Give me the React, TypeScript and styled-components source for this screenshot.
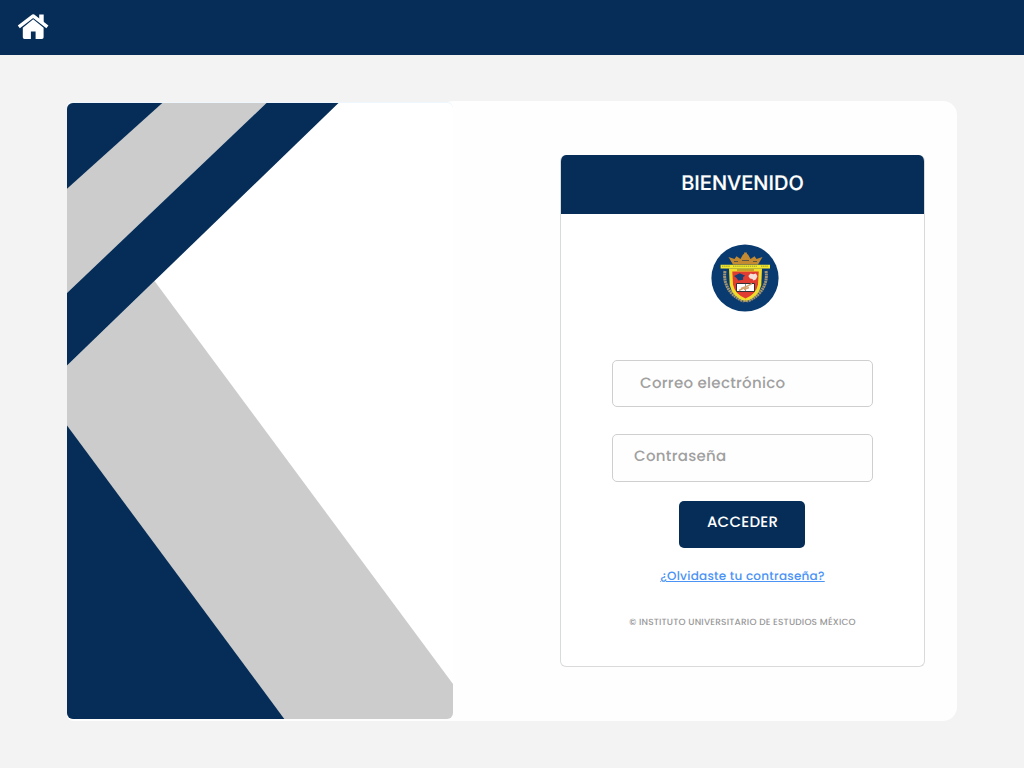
import React from 'react';
import styled, { createGlobalStyle } from 'styled-components';

const navy = '#052d57';

const GlobalStyle = createGlobalStyle`
  *, *::before, *::after { box-sizing: border-box; }
  body { margin: 0; background: #f3f3f3; font-family: Poppins, Inter, sans-serif; text-rendering: geometricPrecision; }
  input, button { text-rendering: inherit; }
`;

const Page = styled.div`
  display: flex;
  flex-direction: column;
  height: 768px;
`;

const TopBar = styled.header`
  display: flex;
  height: 55px;
  padding: 13px 17px;
  background: ${navy};
`;

const HomeLink = styled.a`
  display: block;
  width: 32px;
  height: 28px;
`;

const Panel = styled.main`
  display: flex;
  justify-content: space-between;
  width: 890px;
  height: 620px;
  margin: 46px auto 0;
  padding: 2px 32px 2px 0;
  background: linear-gradient(to right, #f3f3f3 0, #f3f3f3 380px, #fefefe 386px) top / 100% 1px no-repeat, #fefefe;
  border-radius: 6px 14px 14px 6px;
`;

const Artwork = styled.div`
  width: 386px;
  height: 616px;
  border-radius: 6px;
  overflow: hidden;
  background: #fff;
  box-shadow: 0 -1px 0 #eef7fd;
  svg { display: block; }
`;

const LoginCard = styled.form`
  display: flex;
  flex-direction: column;
  align-items: center;
  width: 365px;
  height: 512px;
  margin-top: 52px;
  border: 1px solid #d9dadb;
  border-top: 0;
  border-radius: 6px;
  background: #fff;
  overflow: hidden;
`;

const CardTitle = styled.h1`
  width: 100%;
  height: 59px;
  margin: 0;
  background: ${navy};
  color: #fff;
  font: 500 20px/57px Inter, sans-serif;
  -webkit-text-stroke: 0.2px #fff;
  letter-spacing: 0.03px;
  text-align: center;
`;

const Crest = styled.div`
  width: 68px;
  height: 68px;
  margin: 30px 0 48px 5px;
  svg { display: block; }
`;

const Field = styled.input<{ $indent: number; $tall?: boolean }>`
  width: 261px;
  height: ${p => (p.$tall ? 48 : 47)}px;
  margin-bottom: ${p => (p.$tall ? 19 : 27)}px;
  padding: 0 16px ${p => (p.$tall ? 4 : 1)}px ${p => p.$indent}px;
  border: 1px solid #cfcfcf;
  border-radius: 5px;
  background: #fefefe;
  font: 500 15px Poppins, Inter, sans-serif;
  letter-spacing: 0.3px;
  outline: 0;
  &::placeholder { color: #a0a0a0; opacity: 1; }
`;

const SubmitButton = styled.button`
  width: 126px;
  height: 47px;
  margin-right: 1px;
  padding: 0 0 4px 1px;
  border: 0;
  border-radius: 5px;
  background: ${navy};
  color: #fff;
  font: 500 15px/25px Poppins, Inter, sans-serif;
  letter-spacing: 0.25px;
`;

const ForgotLink = styled.a`
  margin-top: 20px;
  color: #4b93f5;
  font-size: 12px;
  font-weight: 500;
  line-height: 18px;
  letter-spacing: 0.25px;
  text-decoration: underline;
  text-decoration-thickness: 1px;
  text-underline-offset: 1px;
`;

const Copyright = styled.p`
  margin: 30px 0 0;
  color: #999;
  font-size: 9px;
  font-weight: 500;
  line-height: 14px;
  letter-spacing: 0.18px;
  white-space: nowrap;
`;

const HomeIcon = () => (
  <svg width="32" height="28" viewBox="0 0 32 28" aria-label="Inicio">
    <path d="M1.8 13.8 16.2 2.9 30.4 13.8" fill="none" stroke="#fff" strokeWidth="3.4" strokeLinejoin="round" />
    <path d="M22.2 1.5h4.5v10l-4.5-3.8z" fill="#fff" />
    <path d="M5.8 14.8 16.2 6.3 26.6 14.8v9.4q0 1.7-1.7 1.7h-6.3v-7.4h-4.7v7.4H7.5Q5.8 25.9 5.8 24.2z" fill="#fff" />
  </svg>
);

const Stripes = () => (
  <svg width="386" height="616" viewBox="0 0 386 616">
    <path d="M0 0H199.5L0 190Z" fill="#ccc" />
    <path d="M0 0H95.3L0 85.7Z" fill={navy} />
    <path d="M0 262.5 87.5 178 386 581V616H0Z" fill="#ccc" />
    <path d="M199.5 0H271.5L0 262.5V190Z" fill={navy} />
    <path d="M0 322.5 217.3 616H0Z" fill={navy} />
  </svg>
);

const CrestIcon = () => (
  <svg width="68" height="68" viewBox="0 0 68 68">
    <circle cx="34" cy="34" r="33.6" fill="#0a3b70" />
    <g fill="none" stroke="#a39572" strokeWidth="3" strokeDasharray="2 .5">
      <path d="M14 27C12 39 18 51 32 57" />
      <path d="M55 27C57 39 51 51 37 57" />
    </g>
    <path d="M22 20.5 17.5 13l6 2 2-2.7 4 2.6 2.6-4.6h1V8.6h2.8v1.7h1l2.6 4.6 4-2.6 2 2.7 6-2-4.5 7.5Z" fill="#c48a32" />
    <path d="M23 17.5h4m4-1h7m4 1h4" stroke="#5b5546" strokeWidth="1" />
    <path d="M18 24.5H51L50.3 41Q48 53 34.5 57.5 21 53 18.7 41Z" fill="#f1dc2b" />
    <path d="M21.3 27.5H47.7L47 40.5Q45.2 50 34.5 54.5 23.8 50 22 40.5Z" fill="#e13c32" />
    <path d="M9.6 20.7H59v3.7H9.6Z" fill="#f2e72c" />
    <path d="M11 22.2h8m3 0h24m4 0h7" stroke="#7d8438" strokeWidth=".8" strokeDasharray="1.4 .7" />
    <path d="M26 26h17" stroke="#a7872a" strokeWidth="1.3" />
    <path d="m23 32 5.8-2.8 5.4 2.6-2.1 1.3v2.7l-4.8.7-2-2.7Z" fill="#173f75" />
    <path d="m37.3 32 2.2-2.5 2.8.7 2.6-.8 1.5 2.8-1.5 3.4-2.5 1-1-1.7-2.4-.5Z" fill="#f5dfd6" />
    <path d="M25.5 39.5h18v8H25.5Z" fill="#fff" stroke="#342f35" strokeWidth="1" />
    <path d="M34.5 39v8.8" stroke="#493f37" strokeWidth=".6" />
    <path d="M28 46.5 41 39.7M30 44.5l4-1.5m-1 2.5 5-2" stroke="#d5a16d" strokeWidth="1.5" />
    <path d="m32.3 58 2.2-1.4 2.2 1.4" fill="none" stroke="#b29a68" strokeWidth="1.3" />
  </svg>
);

export default function App() {
  return (
    <>
      <GlobalStyle />
      <Page>
        <TopBar>
          <HomeLink><HomeIcon /></HomeLink>
        </TopBar>
        <Panel>
          <Artwork><Stripes /></Artwork>
          <LoginCard>
            <CardTitle>BIENVENIDO</CardTitle>
            <Crest><CrestIcon /></Crest>
            <Field type="email" placeholder="Correo electrónico" $indent={27} />
            <Field type="password" placeholder="Contraseña" $indent={21} $tall />
            <SubmitButton type="button">ACCEDER</SubmitButton>
            <ForgotLink href="#">¿Olvidaste tu contraseña?</ForgotLink>
            <Copyright>© INSTITUTO UNIVERSITARIO DE ESTUDIOS MÉXICO</Copyright>
          </LoginCard>
        </Panel>
      </Page>
    </>
  );
}
